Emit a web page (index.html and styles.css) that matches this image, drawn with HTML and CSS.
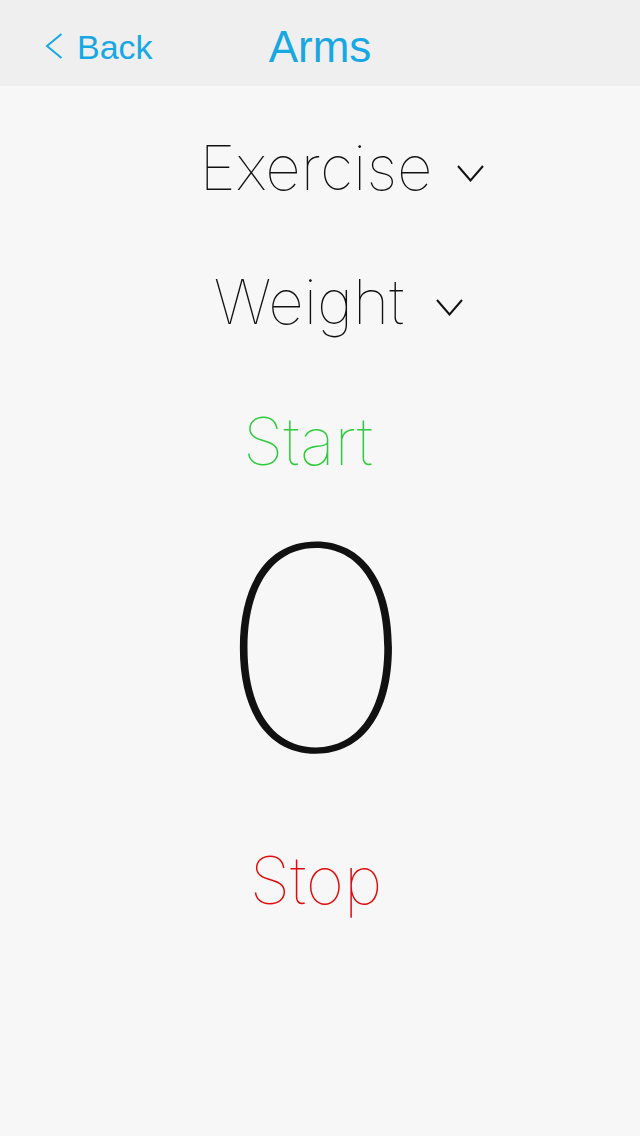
FILE: index.html
```html
<!DOCTYPE html>
<html lang="en">
<head>
<meta charset="utf-8">
<title>Arms</title>
<link rel="stylesheet" href="styles.css">
</head>
<body>
<div class="app">
  <header class="navbar">
    <div class="nav-left">
      <a class="back" href="#">
        <svg class="back-chevron" width="18" height="26" viewBox="0 0 18 26"><polyline points="16.5,1 2,13 16.5,25" fill="none" stroke="currentColor" stroke-width="2"/></svg>
        <span class="back-label">Back</span>
      </a>
    </div>
    <h1 class="nav-title">Arms</h1>
    <div class="nav-right"></div>
  </header>
  <main class="content">
    <div class="picker picker-exercise">
      <span class="picker-label">Exercise</span>
      <svg class="picker-chevron" width="27" height="17" viewBox="0 0 27 17"><polyline points="1,1 13.5,15.5 26,1" fill="none" stroke="currentColor" stroke-width="2"/></svg>
    </div>
    <div class="picker picker-weight">
      <span class="picker-label">Weight</span>
      <svg class="picker-chevron" width="27" height="17" viewBox="0 0 27 17"><polyline points="1,1 13.5,15.5 26,1" fill="none" stroke="currentColor" stroke-width="2"/></svg>
    </div>
    <div class="action action-start">Start</div>
    <div class="counter"><span class="counter-digit">0</span></div>
    <div class="action action-stop">Stop</div>
  </main>
</div>
</body>
</html>
```
FILE: styles.css
```css
* { box-sizing: border-box; }
html, body { margin: 0; padding: 0; }
body {
  background: #f7f7f7;
  font-family: "Inter", "Roboto", "Liberation Sans", sans-serif;
  color: #111;
}
.app {
  width: 640px;
  height: 1136px;
  display: flex;
  flex-direction: column;
}
.navbar {
  height: 86px;
  padding-top: 7px;
  background: #efefef;
  display: grid;
  grid-template-columns: 1fr auto 1fr;
  align-items: center;
  color: #17a8e3;
}
.nav-left { padding-left: 45px; }
.back {
  display: inline-flex;
  align-items: center;
  gap: 14px;
  color: #17a8e3;
  text-decoration: none;
}
.back-chevron { display: block; margin-top: -2px; }
.back-label {
  font-family: "Liberation Sans", sans-serif;
  font-size: 34px;
  font-weight: 400;
  line-height: 40px;
}
.nav-title {
  margin: 0;
  font-family: "Liberation Sans", sans-serif;
  font-size: 44px;
  font-weight: 400;
  line-height: 50px;
  color: #17a8e3;
}
.content {
  flex: 1;
  display: flex;
  flex-direction: column;
  align-items: stretch;
  padding-top: 42px;
  padding-right: 8px;
}
.picker {
  display: grid;
  grid-template-columns: 1fr auto 1fr;
  align-items: center;
  height: 80px;
}
.picker-label {
  grid-column: 2;
  font-size: 62px;
  font-weight: 100;
  line-height: 80px;
  color: #111;
}
.picker-chevron {
  grid-column: 3;
  justify-self: start;
  margin-top: 10px;
  color: #111;
}
.picker-exercise .picker-chevron { margin-left: 24px; }
.picker-weight { margin-top: 54px; padding-right: 14px; }
.picker-weight .picker-chevron { margin-left: 32px; }
.action {
  text-align: center;
  font-size: 66px;
  font-weight: 100;
  line-height: 80px;
  height: 80px;
}
.action-start { margin-top: 59px; padding-right: 16px; color: #2ecc3c; }
.counter {
  margin-top: 17px;
  height: 300px;
  text-align: center;
  font-size: 284px;
  font-weight: 100;
  line-height: 300px;
  color: #111;
}
.counter-digit {
  display: inline-block;
  transform: scaleX(1.2);
}
.action-stop { margin-top: 42px; color: #e00b0b; }
```
